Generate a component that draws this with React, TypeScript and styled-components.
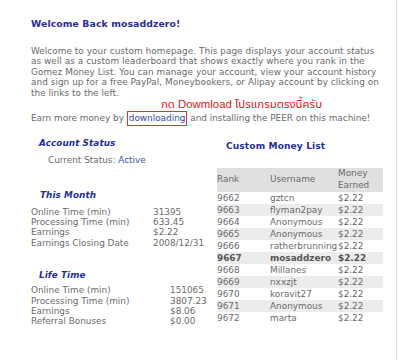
import React from "react";
import styled, { createGlobalStyle } from "styled-components";

const GlobalStyle = createGlobalStyle`
  body {
    margin: 0;
    background: #fff;
    font-family: "DejaVu Sans", Verdana, sans-serif;
  }
`;

const Page = styled.div`
  box-sizing: border-box;
  width: 397px;
  height: 360px;
  border-right: 1px solid #dedede;
  padding: 18px 0 0 31px;
  overflow: hidden;
  font-size: 8.9px;
  color: #6a6a6a;
`;

const Title = styled.h1`
  margin: 0;
  font-size: 9.3px;
  letter-spacing: 0.1px;
  line-height: 12px;
  font-weight: bold;
  color: #2b2b98;
`;

const Intro = styled.p`
  margin: 15.5px 0 0;
  width: 362px;
  line-height: 10.5px;
  letter-spacing: 0.05px;
`;

const Note = styled.div`
  margin: -1.5px 0 0 130px;
  font-family: "Liberation Sans", "Noto Sans Thai", "Noto Sans", sans-serif;
  font-size: 11.4px;
  line-height: 15px;
  color: #e3141c;
`;

const Earn = styled.p`
  margin: 0;
  line-height: 12px;
`;

const Boxed = styled.a`
  color: #2f4aa8;
  text-decoration: none;
  border: 1px solid #e53030;
  padding: 1px 1px 2px;
`;

const Columns = styled.div`
  display: grid;
  grid-template-columns: 186px 166px;
  margin-top: 13px;
`;

const Heading = styled.h2<{ $indent?: number }>`
  margin: 0;
  padding-left: ${(p) => p.$indent ?? 8}px;
  font-size: 8.8px;
  letter-spacing: 0.1px;
  line-height: 12px;
  font-weight: bold;
  font-style: italic;
  color: #1e2f9c;
`;

const Status = styled.div`
  padding-left: 17px;
  margin-top: 6px;
  line-height: 11px;
  span {
    color: #3a56a8;
  }
`;

const Stats = styled.div<{ $valueAt: number; $gap: number }>`
  display: grid;
  grid-template-columns: ${(p) => p.$valueAt}px 1fr;
  margin-top: ${(p) => p.$gap}px;
  line-height: 10.4px;
`;

const Section = styled.div<{ $gap: number }>`
  margin-top: ${(p) => p.$gap}px;
`;

const ListTitle = styled.h2`
  margin: 3px 0 0 9px;
  font-size: 9.1px;
  letter-spacing: 0.1px;
  line-height: 12px;
  font-weight: bold;
  color: #25309a;
`;

const Table = styled.table`
  margin-top: 16px;
  width: 166px;
  border-collapse: collapse;
  font-size: 8.9px;
  color: #6a6a6a;
  th {
    background: #e0e0e0;
    font-weight: normal;
    text-align: left;
    vertical-align: middle;
    height: 24px;
    line-height: 11.7px;
    padding: 0;
  }
  td {
    height: 12px;
    line-height: 12px;
    padding: 0;
    white-space: nowrap;
  }
`;

const Row = styled.tr<{ $shade: boolean; $me: boolean }>`
  background: ${(p) => (p.$shade ? "#ececec" : "transparent")};
  font-weight: ${(p) => (p.$me ? "bold" : "normal")};
  color: ${(p) => (p.$me ? "#555" : "#6a6a6a")};
`;

const introLines = [
  "Welcome to your custom homepage. This page displays your account status",
  "as well as a custom leaderboard that shows exactly where you rank in the",
  "Gomez Money List. You can manage your account, view your account history",
  "and sign up for a free PayPal, Moneybookers, or Alipay account by clicking on",
  "the links to the left.",
];

const monthly = [
  ["Online Time (min)", "31395"],
  ["Processing Time (min)", "633.45"],
  ["Earnings", "$2.22"],
  ["Earnings Closing Date", "2008/12/31"],
];

const lifetime = [
  ["Online Time (min)", "151065"],
  ["Processing Time (min)", "3807.23"],
  ["Earnings", "$8.06"],
  ["Referral Bonuses", "$0.00"],
];

const ranks = [
  ["9662", "gztcn"],
  ["9663", "flyman2pay"],
  ["9664", "Anonymous"],
  ["9665", "Anonymous"],
  ["9666", "ratherbrunning"],
  ["9667", "mosaddzero"],
  ["9668", "Millanes"],
  ["9669", "nxxzjt"],
  ["9670", "koravit27"],
  ["9671", "Anonymous"],
  ["9672", "marta"],
];

export default function App() {
  return (
    <>
      <GlobalStyle />
      <Page>
        <Title>Welcome Back mosaddzero!</Title>
        <Intro>
          {introLines.map((line, i) => (
            <React.Fragment key={i}>
              {line}
              {i < introLines.length - 1 && <br />}
            </React.Fragment>
          ))}
        </Intro>
        <Note>กด Dowmload โปรแกรมตรงนี้ครับ</Note>
        <Earn>
          Earn more money by <Boxed href="#">downloading</Boxed> and installing the PEER on this machine!
        </Earn>
        <Columns>
          <div>
            <Heading>Account Status</Heading>
            <Status>
              Current Status: <span>Active</span>
            </Status>
            <Section $gap={23}>
              <Heading $indent={9}>This Month</Heading>
              <Stats $valueAt={122} $gap={6}>
                {monthly.map(([k, v]) => (
                  <React.Fragment key={k}>
                    <div>{k}</div>
                    <div>{v}</div>
                  </React.Fragment>
                ))}
              </Stats>
            </Section>
            <Section $gap={20.5}>
              <Heading>Life Time</Heading>
              <Stats $valueAt={139} $gap={4.5}>
                {lifetime.map(([k, v]) => (
                  <React.Fragment key={k}>
                    <div>{k}</div>
                    <div>{v}</div>
                  </React.Fragment>
                ))}
              </Stats>
            </Section>
          </div>
          <div>
            <ListTitle>Custom Money List</ListTitle>
            <Table>
              <colgroup>
                <col style={{ width: 53 }} />
                <col style={{ width: 68 }} />
                <col style={{ width: 45 }} />
              </colgroup>
              <thead>
                <tr>
                  <th>Rank</th>
                  <th>Username</th>
                  <th>
                    Money
                    <br />
                    Earned
                  </th>
                </tr>
              </thead>
              <tbody>
                {ranks.map(([rank, user], i) => (
                  <Row key={rank} $shade={i % 2 === 1} $me={user === "mosaddzero"}>
                    <td>{rank}</td>
                    <td>{user}</td>
                    <td>$2.22</td>
                  </Row>
                ))}
              </tbody>
            </Table>
          </div>
        </Columns>
      </Page>
    </>
  );
}
